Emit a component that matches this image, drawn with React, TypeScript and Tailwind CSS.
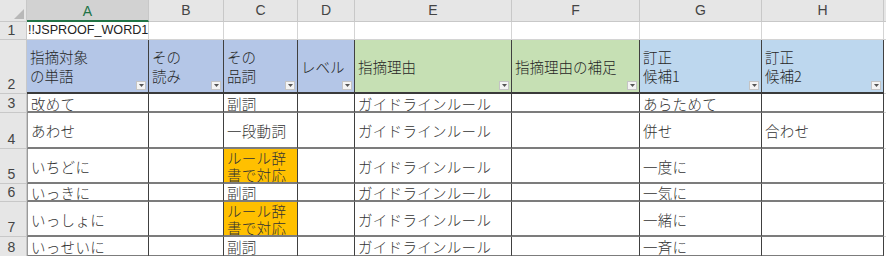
import React from 'react';

const cols = ['A', 'B', 'C', 'D', 'E', 'F', 'G', 'H'];

const jp = "font-['Noto_Sans_CJK_JP',sans-serif] font-light";

type Head = { lines: string[]; bg: string };

const heads: Head[] = [
    { lines: ['指摘対象', 'の単語'], bg: 'bg-[#b4c6e7]' },
    { lines: ['その', '読み'], bg: 'bg-[#b4c6e7]' },
    { lines: ['その', '品詞'], bg: 'bg-[#b4c6e7]' },
    { lines: ['レベル'], bg: 'bg-[#b4c6e7]' },
    { lines: ['指摘理由'], bg: 'bg-[#c6e0b4]' },
    { lines: ['指摘理由の補足'], bg: 'bg-[#c6e0b4]' },
    { lines: ['訂正', '候補1'], bg: 'bg-[#bdd7ee]' },
    { lines: ['訂正', '候補2'], bg: 'bg-[#bdd7ee]' },
];

type Row = { n: number; cells: (string | null)[] };

// null = "ルール辞書で対応" cell (orange)
const rows: Row[] = [
    { n: 3, cells: ['改めて', '', '副詞', '', 'ガイドラインルール', '', 'あらためて', ''] },
    { n: 4, cells: ['あわせ', '', '一段動詞', '', 'ガイドラインルール', '', '併せ', '合わせ'] },
    { n: 5, cells: ['いちどに', '', null, '', 'ガイドラインルール', '', '一度に', ''] },
    { n: 6, cells: ['いっきに', '', '副詞', '', 'ガイドラインルール', '', '一気に', ''] },
    { n: 7, cells: ['いっしょに', '', null, '', 'ガイドラインルール', '', '一緒に', ''] },
    { n: 8, cells: ['いっせいに', '', '副詞', '', 'ガイドラインルール', '', '一斉に', ''] },
];

function FilterButton() {
    return (
        <div className="absolute right-[2px] bottom-[2px] flex h-[9px] w-[10px] items-center justify-center border border-[#c4c4c4] bg-[#f4f4f4]">
            <svg width="5" height="3" viewBox="0 0 5 3">
                <path d="M0 0h5L2.5 3z" fill="#555" />
            </svg>
        </div>
    );
}

function RowNum({ n }: { n: number }) {
    return (
        <div className="flex items-end justify-center border-r border-b border-[#c8c8c8] bg-[#e6e6e6] pb-[1px] pr-[3px] text-[14px] leading-[16px] text-[#444]">
            {n}
        </div>
    );
}

export default function App() {
    return (
        <div className="h-[256px] w-[886px] overflow-hidden bg-white font-['Liberation_Sans',sans-serif]">
            <div className="grid grid-cols-[27px_122px_75px_74px_57px_157px_128px_122px_122px_1fr] grid-rows-[22px_18px_54px_19px_36px_35px_18px_35px_20px]">
                {/* column letters */}
                <div className="relative border-r border-b border-[#c8c8c8] bg-[#e6e6e6]">
                    <svg className="absolute right-[2px] bottom-[2px]" width="10" height="10" viewBox="0 0 10 10">
                        <path d="M10 0v10H0z" fill="#b8b8b8" />
                    </svg>
                </div>
                {cols.map((c, i) => (
                    <div
                        key={c}
                        className={
                            i === 0
                                ? 'flex items-center justify-center border-r border-b-2 border-r-[#c8c8c8] border-b-[#217346] bg-[#d2d2d2] pt-[2px] text-[14px] text-[#217346]'
                                : 'flex items-center justify-center border-r border-b border-[#c8c8c8] bg-[#e6e6e6] text-[14px] text-[#444]'
                        }
                    >
                        {c}
                    </div>
                ))}
                <div className="border-b border-[#c8c8c8] bg-[#e6e6e6]" />

                {/* row 1 */}
                <RowNum n={1} />
                <div className="flex items-center overflow-visible whitespace-nowrap border-r border-b border-[#d4d4d4] pl-[1px] text-[12.6px] text-[#222]">
                    !!JSPROOF_WORD1
                </div>
                {cols.slice(1).map((c) => (
                    <div key={c} className="border-r border-b border-[#d4d4d4]" />
                ))}
                <div className="border-b border-[#d4d4d4]" />

                {/* row 2: table header */}
                <RowNum n={2} />
                {heads.map((h, i) => (
                    <div
                        key={i}
                        className={`relative flex flex-col justify-center border-r border-b-2 border-r-[#404040] border-b-[#3a3a3a] pl-[3px] text-[14.5px] leading-[19px] text-[#262626] ${h.bg} ${jp}`}
                    >
                        {h.lines.map((l) => (
                            <span key={l} className="whitespace-nowrap">
                                {l}
                            </span>
                        ))}
                        <FilterButton />
                    </div>
                ))}
                <div className="border-b border-[#d4d4d4]" />

                {/* data rows */}
                {rows.map((r) => (
                    <React.Fragment key={r.n}>
                        <RowNum n={r.n} />
                        {r.cells.map((v, i) =>
                            v === null ? (
                                <div
                                    key={i}
                                    className={`flex flex-col justify-center overflow-hidden border-r border-b-2 border-r-[#404040] border-b-[#7c7c7c] bg-[#ffc000] pl-[3px] pt-[1px] text-[14.5px] leading-[17px] tracking-[0.3px] text-[#333] ${jp}`}
                                >
                                    <span>ルール辞</span>
                                    <span>書で対応</span>
                                </div>
                            ) : (
                                <div
                                    key={i}
                                    className={`flex items-center overflow-hidden whitespace-nowrap border-r border-b-2 border-b-[#7c7c7c] pl-[3px] pt-[2px] text-[14.5px] leading-[16px] tracking-[0.3px] text-[#333] ${i === 0 ? 'border-l border-l-[#9a9a9a]' : ''} border-r-[#404040] ${jp}`}
                                >
                                    {v}
                                </div>
                            ),
                        )}
                        <div className="border-b border-[#d4d4d4]" />
                    </React.Fragment>
                ))}
            </div>
        </div>
    );
}
